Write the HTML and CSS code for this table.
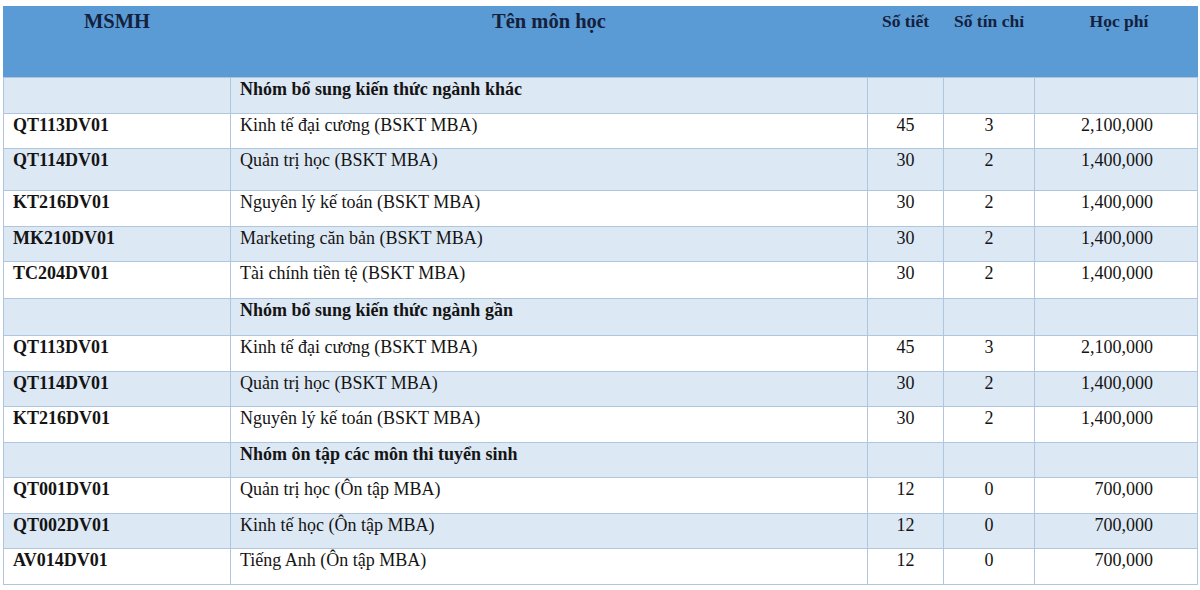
FILE: index.html
```html
<!DOCTYPE html>
<html lang="vi">
<head>
<meta charset="utf-8">
<title>Học phí</title>
<link rel="stylesheet" href="styles.css">
</head>
<body>
<table class="fees">
  <colgroup>
    <col class="c-code"><col class="c-name"><col class="c-hours"><col class="c-credits"><col class="c-fee">
  </colgroup>
  <thead>
    <tr>
      <th class="big">MSMH</th>
      <th class="big">Tên môn học</th>
      <th>Số tiết</th>
      <th>Số tín chỉ</th>
      <th class="fee-h">Học phí</th>
    </tr>
  </thead>
  <tbody>
    <tr class="band group"><td></td><td>Nhóm bổ sung kiến thức ngành khác</td><td></td><td></td><td></td></tr>
    <tr><td class="code">QT113DV01</td><td>Kinh tế đại cương (BSKT MBA)</td><td class="num">45</td><td class="num">3</td><td class="fee">2,100,000</td></tr>
    <tr class="band tall"><td class="code">QT114DV01</td><td>Quản trị học (BSKT MBA)</td><td class="num">30</td><td class="num">2</td><td class="fee">1,400,000</td></tr>
    <tr><td class="code">KT216DV01</td><td>Nguyên lý kế toán (BSKT MBA)</td><td class="num">30</td><td class="num">2</td><td class="fee">1,400,000</td></tr>
    <tr class="band"><td class="code">MK210DV01</td><td>Marketing căn bản (BSKT MBA)</td><td class="num">30</td><td class="num">2</td><td class="fee">1,400,000</td></tr>
    <tr class="mid"><td class="code">TC204DV01</td><td>Tài chính tiền tệ (BSKT MBA)</td><td class="num">30</td><td class="num">2</td><td class="fee">1,400,000</td></tr>
    <tr class="band group mid"><td></td><td>Nhóm bổ sung kiến thức ngành gần</td><td></td><td></td><td></td></tr>
    <tr><td class="code">QT113DV01</td><td>Kinh tế đại cương (BSKT MBA)</td><td class="num">45</td><td class="num">3</td><td class="fee">2,100,000</td></tr>
    <tr class="band"><td class="code">QT114DV01</td><td>Quản trị học (BSKT MBA)</td><td class="num">30</td><td class="num">2</td><td class="fee">1,400,000</td></tr>
    <tr><td class="code">KT216DV01</td><td>Nguyên lý kế toán (BSKT MBA)</td><td class="num">30</td><td class="num">2</td><td class="fee">1,400,000</td></tr>
    <tr class="band group"><td></td><td>Nhóm ôn tập các môn thi tuyển sinh</td><td></td><td></td><td></td></tr>
    <tr><td class="code">QT001DV01</td><td>Quản trị học (Ôn tập MBA)</td><td class="num">12</td><td class="num">0</td><td class="fee">700,000</td></tr>
    <tr class="band"><td class="code">QT002DV01</td><td>Kinh tế học (Ôn tập MBA)</td><td class="num">12</td><td class="num">0</td><td class="fee">700,000</td></tr>
    <tr><td class="code">AV014DV01</td><td>Tiếng Anh (Ôn tập MBA)</td><td class="num">12</td><td class="num">0</td><td class="fee">700,000</td></tr>
  </tbody>
</table>
</body>
</html>
```

FILE: styles.css
```css
html, body {
  margin: 0;
  padding: 0;
  background: #ffffff;
}

body {
  padding: 6px 0 0 3px;
  font-family: "Liberation Serif", "Times New Roman", serif;
  color: #141414;
}

.fees {
  border-collapse: collapse;
  table-layout: fixed;
  width: 1194px;
  font-size: 18px;
  line-height: 20px;
}

.c-code { width: 227px; }
.c-name { width: 637px; }
.c-hours { width: 76px; }
.c-credits { width: 91px; }
.c-fee { width: 163px; }

.fees thead tr {
  height: 71px;
  background: #5b9bd5;
}

.fees th {
  vertical-align: top;
  padding: 3px 2px 0;
  font-weight: bold;
  font-size: 17.5px;
  line-height: 22px;
  color: #14213d;
  text-align: center;
  border: 1px solid #5b9bd5;
  border-bottom-color: #aec4dc;
}

.fees th.big {
  font-size: 20.5px;
}

.fees th.fee-h {
  padding-left: 8px;
}

.fees tbody tr {
  height: 35.5px;
  background: #ffffff;
}

.fees tbody tr.band {
  background: #dde8f5;
}

.fees tbody tr.mid {
  height: 37px;
}

.fees tbody tr.tall {
  height: 42px;
}

.fees td {
  vertical-align: top;
  padding: 1px 9px 0;
  border: 1px solid #b0c6de;
  white-space: nowrap;
}

.fees td.code,
.fees tr.group td {
  font-weight: bold;
}

.fees td.num {
  text-align: center;
  padding: 1px 2px 0;
}

.fees td.fee {
  text-align: right;
  padding-right: 44px;
}
```
